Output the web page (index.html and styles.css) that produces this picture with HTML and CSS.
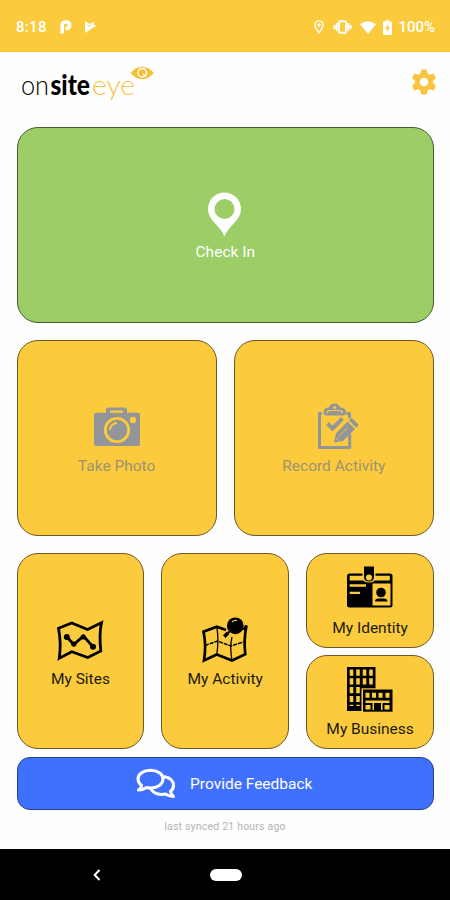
FILE: index.html
```html
<!DOCTYPE html>
<html lang="en">
<head>
  <meta charset="UTF-8" />
  <meta name="viewport" content="width=device-width, initial-scale=1.0"/>
  <title>onsiteeye</title>
  <link rel="stylesheet" href="styles.css">
</head>
<body>
  <div class="status-bar">
    <span class="time">8:18</span>
    <svg class="status-p" width="12" height="14" viewBox="0 0 12 14">
      <path d="M2.200 13.500V4.500Q2.200 2 6 2Q9.600 2 9.600 5.200Q9.600 8.500 5.500 8.500" fill="none" stroke="#fff" stroke-width="3.600"/>
    </svg>
    <svg class="status-play" width="13" height="14" viewBox="0 0 13 14">
      <path d="M1 1L5.500 4L10.500 1.500L9.500 4.500L12.500 5.500L1 13Z" fill="#fff"/>
      <path d="M3.500 4.500L5.500 6.500L9 3.500" fill="none" stroke="#fbcb3d" stroke-width="0.700"/>
    </svg>
    <div class="status-right">
      <svg width="10" height="14" viewBox="0 0 10 14">
        <path d="M5 12.800C3 10 .9 7.500.9 5A4.100 4.100 0 0 1 9.100 5C9.100 7.500 7 10 5 12.800Z" fill="none" stroke="#fff" stroke-width="1.400"/>
        <circle cx="5" cy="5" r="1.700" fill="#fff"/>
      </svg>
      <svg class="vibrate" width="19" height="14" viewBox="0 0 19 14">
        <rect x="6" y="1.200" width="7" height="11.600" rx="1" fill="none" stroke="#fff" stroke-width="1.900"/>
        <path d="M3.700 3V11M15.300 3V11M1.400 5V9M17.600 5V9" stroke="#fff" stroke-width="2"/>
      </svg>
      <svg class="wifi" width="16" height="13" viewBox="0 0 16 13">
        <path d="M0 3.200Q8-2.600 16 3.200L8 13Z" fill="#fff"/>
      </svg>
      <svg class="battery" width="9" height="15" viewBox="0 0 9 15">
        <path d="M2.800 0H6.200V1.500H8Q9 1.500 9 2.500V14Q9 15 8 15H1Q0 15 0 14V2.500Q0 1.500 1 1.500H2.800Z" fill="#fff"/>
        <path d="M5.200 3.800L2.300 8.700H4.200V12.300L6.900 7.300H5.200Z" fill="#fbcb3d"/>
      </svg>
      <span class="percent">100%</span>
    </div>
  </div>

  <div class="header">
    <svg class="logo" width="134" height="38" viewBox="0 0 134 38">
      <text class="logo-thin" x="0" y="31" textLength="28" lengthAdjust="spacingAndGlyphs">on</text>
      <text class="logo-bold" x="29.500" y="31" textLength="39.500" lengthAdjust="spacingAndGlyphs">site</text>
      <text class="logo-eye" x="71" y="31" textLength="43" lengthAdjust="spacingAndGlyphs">eye</text>
      <path d="M109.500 9Q121-3.500 133 9Q121 21.500 109.500 9Z" fill="#f5bf35"/>
      <circle cx="121.300" cy="8.700" r="4.300" fill="none" stroke="#fff" stroke-width="1.500"/>
      <path d="M122 9.700L124.500 12.200" stroke="#fff" stroke-width="1.300"/>
    </svg>
    <svg class="gear" width="26" height="26" viewBox="0 0 26 26">
      <circle cx="13" cy="13" r="6.700" fill="none" stroke="#f9c440" stroke-width="5"/>
      <g fill="#f9c440">
        <path id="tooth" d="M9.300 5.500L10.400.6H15.600L16.700 5.500Z"/>
        <use href="#tooth" transform="rotate(60 13 13)"/>
        <use href="#tooth" transform="rotate(120 13 13)"/>
        <use href="#tooth" transform="rotate(180 13 13)"/>
        <use href="#tooth" transform="rotate(240 13 13)"/>
        <use href="#tooth" transform="rotate(300 13 13)"/>
      </g>
    </svg>
  </div>

  <div class="menu">
    <div class="tile check-in">
      <svg class="icon" viewBox="0 0 48 48">
        <path d="M23.500 49.500C19 38.500 7 33 7 22A16.500 16.500 0 0 1 40 22C40 33 28 38.500 23.500 49.500ZM23.500 12A10 10 0 1 0 23.500 32A10 10 0 1 0 23.500 12Z" fill="#fff" fill-rule="evenodd"/>
      </svg>
      <span>Check In</span>
    </div>

    <div class="menu-row">
      <div class="tile disabled">
        <svg class="icon" viewBox="0 0 48 48">
          <path d="M3 11.700H13V9Q13 6.500 15.500 6.500H31.500Q34 6.500 34 9V11.700H45Q47 11.700 47 13.700V43Q47 45 45 45H3Q1 45 1 43V13.700Q1 11.700 3 11.700ZM17 9.500V11.700H30V9.500Z" fill="#939598" fill-rule="evenodd"/>
          <circle cx="24" cy="29" r="11.700" fill="none" stroke="#fbcb3d" stroke-width="2.800"/>
          <path d="M17 29A7 7 0 0 1 24 22" fill="none" stroke="#fbcb3d" stroke-width="2"/>
          <circle cx="40" cy="19" r="3.200" fill="#fbcb3d"/>
        </svg>
        <span>Take Photo</span>
      </div>
      <div class="tile disabled">
        <svg class="icon" viewBox="0 0 48 48">
          <path d="M12 12.500H9.500V46.500H39.700V33M36.500 12.500H39.500V17" fill="none" stroke="#939598" stroke-width="3" stroke-linejoin="round"/>
          <path d="M16.500 14.500Q13.500 14.500 13.500 11Q13.500 6.500 19 6.500Q20 2.500 24.500 2.500Q29 2.500 30 6.500Q36 6.500 36 11Q36 14.500 33 14.500Z" fill="#939598"/>
          <circle cx="24.700" cy="6.500" r="1.500" fill="#fbcb3d"/>
          <path d="M17 12Q17 9.500 20 9.500H29.500Q32.500 9.500 32.500 12" fill="none" stroke="#fbcb3d" stroke-width="1.200"/>
          <path d="M17.500 22.500L22.500 27.500L32.500 17.500" fill="none" stroke="#939598" stroke-width="4"/>
          <path d="M24 41.500L26 32.500L37.500 20.500L45 28L33 40Z" fill="#939598"/>
          <path d="M38.700 19.300L40.500 17.500Q41.500 16.500 42.500 17.500L48 23Q49 24 48 25L46.200 26.800Z" fill="#939598"/>
          <path d="M28.500 35.500L37.500 26.500M26 37L28.500 39.500" stroke="#fbcb3d" stroke-width="0.800"/>
        </svg>
        <span>Record Activity</span>
      </div>
    </div>

    <div class="menu-row">
      <div class="tile">
        <svg class="icon" viewBox="0 0 48 48">
          <path d="M2.500 14.300L15.800 9L31.500 15.500L45.500 8.700Q43 20 44.800 37L31.800 43.500L15.800 37.700L3.200 44.300Q5.500 30 2.500 14.300Z" fill="none" stroke="#000" stroke-width="2.800"/>
          <path d="M10.800 23L17.800 30.500L27.500 22L36.800 32.700" fill="none" stroke="#000" stroke-width="2.800"/>
          <circle cx="10.800" cy="23" r="3"/>
          <circle cx="17.800" cy="30" r="2.600"/>
          <circle cx="27.300" cy="23" r="2.600"/>
          <circle cx="37" cy="32.700" r="3"/>
        </svg>
        <span>My Sites</span>
      </div>
      <div class="tile">
        <svg class="icon" viewBox="0 0 48 48">
          <path d="M25 16L15.800 12.700L2.500 17.700Q5.500 31 3 46.500L15.800 40.500L31 46.500L44.300 40.300Q42.500 26 45.500 11.500L42.500 16" fill="none" stroke="#000" stroke-width="2.700"/>
          <path d="M15.800 12.700Q18 26 15.800 40.500M31 23Q28.500 33 31 46.500" fill="none" stroke="#000" stroke-width="1.300"/>
          <path d="M4 31.500L16.500 27L30 32L44 27.500" fill="none" stroke="#000" stroke-width="1.500" stroke-dasharray="4 1"/>
          <circle cx="34.300" cy="11.800" r="8.400"/>
          <path d="M31 8Q33 6 36 6.500" fill="none" stroke="#fbcb3d" stroke-width="1.200"/>
          <path d="M28.500 17.500L27 19" stroke="#000" stroke-width="1.800"/>
          <path d="M27.200 18.800L23.200 22.600" stroke="#000" stroke-width="3.600"/>
        </svg>
        <span>My Activity</span>
      </div>
      <div class="tile-stack">
        <div class="tile">
          <svg class="icon" viewBox="0 0 48 48">
            <rect x="1" y="10.500" width="45.500" height="34" rx="2.500"/>
            <path d="M3.700 12.800H43.800V17.500H3.700Z" fill="#fbcb3d"/>
            <path d="M3.700 22.500H20M3.700 29.800H14" stroke="#fbcb3d" stroke-width="2.300"/>
            <path d="M26.500 20.500H44.500V42.500H26.500Z" fill="#fbcb3d"/>
            <circle cx="35" cy="29.500" r="4.800"/>
            <path d="M29 38.500Q29 35.500 32.500 35.500H37.500Q41.500 35.500 41.500 38.500Z"/>
            <path d="M16.500 9H29.500V14Q29.500 19.500 23 19.500Q16.500 19.500 16.500 14Z" fill="#fbcb3d"/>
            <path d="M18 3.500H28V13.500Q28 18.500 23 18.500Q18 18.500 18 13.500Z"/>
            <circle cx="23" cy="14.500" r="3" fill="#fbcb3d"/>
          </svg>
          <span>My Identity</span>
        </div>
        <div class="tile">
          <svg class="icon" viewBox="0 0 48 48">
            <path d="M1 3H29.500V26H17V47H1Z"/>
            <path d="M5.500 5.500V42M12 5.500V42M18.500 5.500V23M25 5.500V23" stroke="#fbcb3d" stroke-width="3.600" stroke-dasharray="6.200 2.600"/>
            <path d="M15.500 24.300H47V48H15.500Z" fill="#fbcb3d"/>
            <path d="M17 25.500H46.500V47.700H17Z"/>
            <path d="M19.500 31.300H23.500M26 31.300H30M32.500 31.300H36.500M39.500 31.300H43.500" stroke="#fbcb3d" stroke-width="5"/>
            <path d="M19.500 41H24.500V45.500H19.500ZM38.500 41H43.500V45.500H38.500ZM19.500 36.500H43.500V39H19.500ZM26.500 39H28V46H26.500ZM35 39H36.500V46H35Z" fill="#fbcb3d"/>
          </svg>
          <span>My Business</span>
        </div>
      </div>
    </div>
  </div>

  <div class="feedback">
    <svg width="40" height="32" viewBox="0 0 40 32">
      <path d="M5.500 17.500Q2 14.500 2 11C2 5.800 7.500 2.300 14.500 2.300C21.500 2.300 27 5.800 27 11C27 16.200 21.500 20 14.500 20Q12.500 20 10.500 19.500Q7 22 2.500 22Q5.500 20 5.500 17.500Z" fill="none" stroke="#fff" stroke-width="3" stroke-linejoin="round"/>
      <path d="M27.500 8.500C34 9.500 37.500 13 37.500 17.500Q37.500 21 34.500 23.500Q35 26.500 37.500 28.500Q33 28.500 29.500 26Q19 28 14.500 20.500" fill="none" stroke="#fff" stroke-width="3" stroke-linejoin="round"/>
    </svg>
    <span>Provide Feedback</span>
  </div>
  <div class="synced">last synced 21 hours ago</div>

  <div class="nav-bar">
    <svg class="back" width="8" height="12" viewBox="0 0 8 12">
      <path d="M6.500 1L1.700 6L6.500 11" fill="none" stroke="#fff" stroke-width="2"/>
    </svg>
    <div class="home"></div>
  </div>
</body>
</html>
```
FILE: styles.css
```css
* {
  box-sizing: border-box;
}

body {
  font-family: Roboto, sans-serif;
  margin: 0;
  background: #fefefe;
  color: #1c1a10;
  height: 900px;
  display: flex;
  flex-direction: column;
  overflow: hidden;
}

svg {
  display: block;
  flex: none;
}

.status-bar {
  height: 52px;
  flex: none;
  display: flex;
  align-items: center;
  padding: 2px 15px 0 16px;
  background: #fbcb3d;
  color: #fff;
  font-size: 15px;
  font-weight: 500;
}

.time {
  width: 44px;
  letter-spacing: 0.3px;
}

.status-play {
  margin-left: 12px;
}

.status-right {
  margin-left: auto;
  display: flex;
  align-items: center;
}

.vibrate {
  margin-left: 9px;
}

.wifi {
  margin-left: 8px;
}

.battery {
  margin: 0 6px 0 7px;
}

.header {
  height: 75px;
  flex: none;
  display: flex;
  justify-content: space-between;
  align-items: flex-start;
  padding: 12px 13px 0 21px;
}

.gear {
  margin-top: 5px;
}

.logo-thin,
.logo-eye {
  font-family: Lato, sans-serif;
  font-size: 28px;
  font-weight: 300;
}

.logo-bold {
  font-family: Lato, sans-serif;
  font-size: 28px;
  font-weight: 900;
}

.logo-eye {
  fill: #f7c342;
}

.menu {
  display: flex;
  flex-direction: column;
  gap: 17px;
  padding: 0 16px 0 16.5px;
}

.menu-row {
  display: grid;
  grid-auto-flow: column;
  grid-auto-columns: minmax(0, 1fr);
  gap: 17px;
  height: 196px;
}

.tile {
  flex: 1;
  display: flex;
  flex-direction: column;
  align-items: center;
  justify-content: center;
  gap: 7px;
  background: #fbcb3d;
  border: 1px solid #6b5a28;
  border-radius: 21px;
  font-size: 15.5px;
  line-height: 20px;
}

.check-in {
  flex: none;
  height: 196px;
  padding-bottom: 1px;
  background: #9ccd67;
  border-color: #465c30;
  color: #fff;
}

.disabled {
  color: #9c9372;
}

.icon {
  width: 48px;
  height: 48px;
  overflow: visible;
}

.tile-stack {
  display: flex;
  flex-direction: column;
  gap: 7px;
}

.feedback {
  height: 53px;
  flex: none;
  margin: 8px 16px 0 16.5px;
  padding-right: 2px;
  display: flex;
  align-items: center;
  justify-content: center;
  gap: 14px;
  background: #3f70fe;
  border: 1px solid #24408c;
  border-radius: 13px;
  color: #fff;
  font-size: 15.5px;
}

.synced {
  margin-top: 10px;
  text-align: center;
  font-size: 10.5px;
  line-height: 14px;
  letter-spacing: 0.2px;
  color: #b4b4b4;
}

.nav-bar {
  height: 51px;
  margin-top: auto;
  flex: none;
  display: flex;
  align-items: center;
  background: #000;
}

.back {
  margin-left: 93px;
}

.home {
  width: 32px;
  height: 12px;
  margin-left: 109px;
  border-radius: 6px;
  background: #fff;
}
```
